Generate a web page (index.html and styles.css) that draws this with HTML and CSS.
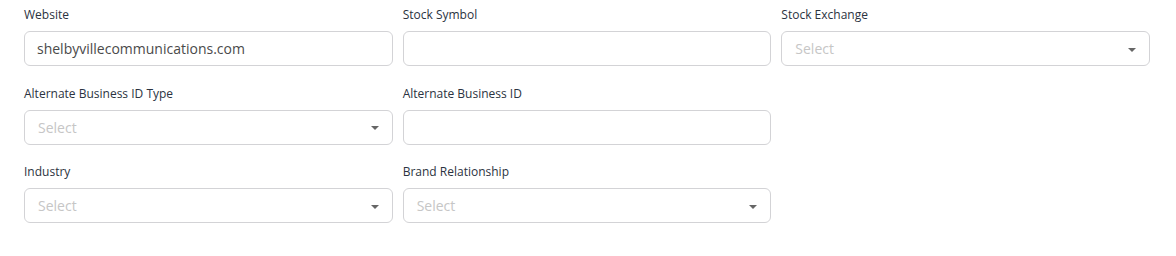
FILE: index.html
```html
<!DOCTYPE html>
<html lang="en">
<head>
    <meta charset="UTF-8">
    <meta name="viewport" content="width=device-width, initial-scale=1.0">
    <title>Business Details</title>
    <link rel="stylesheet" href="styles.css">
</head>
<body>
    <form class="details-form">
        <div class="form-group">
            <label for="website">Website</label>
            <input type="text" id="website" value="shelbyvillecommunications.com">
        </div>
        <div class="form-group">
            <label for="symbol">Stock Symbol</label>
            <input type="text" id="symbol">
        </div>
        <div class="form-group">
            <label>Stock Exchange</label>
            <div class="select-box">
                <span class="placeholder">Select</span>
                <span class="caret"></span>
            </div>
        </div>

        <div class="form-group">
            <label>Alternate Business ID Type</label>
            <div class="select-box">
                <span class="placeholder">Select</span>
                <span class="caret"></span>
            </div>
        </div>
        <div class="form-group">
            <label for="alt-id">Alternate Business ID</label>
            <input type="text" id="alt-id">
        </div>
        <div class="form-group empty"></div>

        <div class="form-group">
            <label>Industry</label>
            <div class="select-box">
                <span class="placeholder">Select</span>
                <span class="caret"></span>
            </div>
        </div>
        <div class="form-group">
            <label>Brand Relationship</label>
            <div class="select-box">
                <span class="placeholder">Select</span>
                <span class="caret"></span>
            </div>
        </div>
    </form>
</body>
</html>
```

FILE: styles.css
```css
* {
    margin: 0;
    padding: 0;
    box-sizing: border-box;
    font-family: 'Open Sans', sans-serif;
}

body {
    background-color: #FFFFFF;
    padding: 7px 0 0 24px;
}

.details-form {
    width: 1126px;
    display: grid;
    grid-template-columns: repeat(3, 1fr);
    column-gap: 10px;
    row-gap: 19.5px;
}

label {
    display: block;
    font-size: 12px;
    line-height: 16px;
    color: #2B3341;
    margin-bottom: 8px;
}

input,
.select-box {
    width: 100%;
    height: 35px;
    padding: 0 12px;
    border: 1px solid #D3D3D6;
    border-radius: 6px;
    font-size: 14px;
    color: #4A4A4A;
    background-color: white;
    outline: none;
}

.select-box {
    display: flex;
    align-items: center;
    justify-content: space-between;
    padding-left: 13px;
    padding-right: 13px;
}

.placeholder {
    color: #C6C6C6;
}

.caret {
    width: 0;
    height: 0;
    border-left: 4px solid transparent;
    border-right: 4px solid transparent;
    border-top: 4px solid #666666;
    margin-top: 2px;
}
```
